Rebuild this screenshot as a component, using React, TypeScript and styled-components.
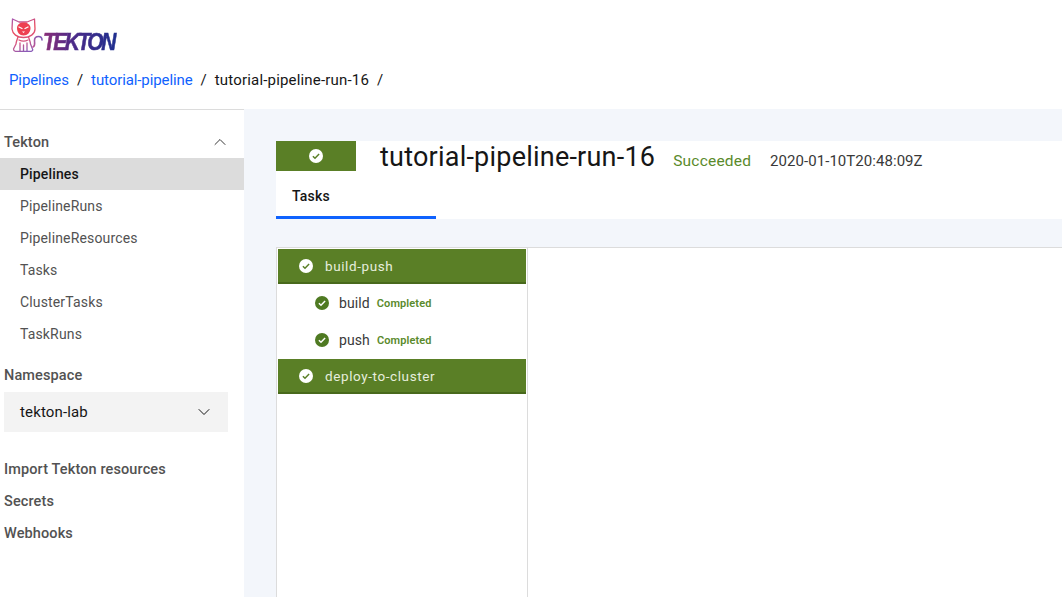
import React from 'react';
import styled, { createGlobalStyle } from 'styled-components';
import { ChevronDown, ChevronUp } from 'lucide-react';

const GlobalStyle = createGlobalStyle`
  html, body {
    margin: 0;
    height: 100%;
    overflow: hidden;
    background: #fff;
    font-family: Roboto, "Liberation Sans", sans-serif;
  }
  * { box-sizing: border-box; }
`;

const Page = styled.div`
  display: flex;
  flex-direction: column;
  height: 597px;
  width: 1062px;
  overflow: hidden;
`;

const TopBar = styled.header`
  height: 109px;
  padding: 18px 0 0 9px;
`;

const LogoRow = styled.div`
  display: flex;
  align-items: flex-end;
  height: 34px;
  margin-left: 2px;
`;

const LogoText = styled.span`
  font-family: "Liberation Sans", sans-serif;
  font-size: 25px;
  line-height: 22px;
  font-weight: 700;
  font-style: italic;
  letter-spacing: -3px;
  padding-right: 4px;
  transform: scale(0.84, 0.96);
  transform-origin: left bottom;
  -webkit-text-stroke: 0.6px transparent;
  background: linear-gradient(90deg, #8c2f78 0%, #4c2a88 40%, #1e2f8f 100%);
  -webkit-background-clip: text;
  background-clip: text;
  -webkit-text-fill-color: transparent;
`;

const Crumbs = styled.nav`
  display: flex;
  align-items: center;
  margin-top: 17px;
  font-size: 15px;
  line-height: 22px;
  color: #161616;
`;

const CrumbLink = styled.a`
  color: #0f62fe;
  letter-spacing: -0.1px;
`;

const CrumbCurrent = styled.span`
  letter-spacing: 0.18px;
`;

const CrumbSep = styled.span`
  margin: 0 8px;
`;

const Body = styled.div`
  display: flex;
  flex: 1;
  min-height: 0;
`;

const Sidebar = styled.aside`
  width: 244px;
  flex: none;
  border-top: 1px solid #dcdcdc;
  padding-top: 16px;
  color: #525252;
`;

const GroupHeader = styled.div`
  display: flex;
  align-items: center;
  justify-content: space-between;
  height: 32px;
  padding: 0 14px 0 4px;
  font-size: 14.5px;
  font-weight: 500;
  letter-spacing: 0.12px;
  color: #525252;
`;

const SideItem = styled.div<{ $active?: boolean }>`
  display: flex;
  align-items: center;
  height: 32px;
  padding-left: 20px;
  font-size: 14px;
  letter-spacing: 0.15px;
  font-weight: ${({ $active }) => ($active ? 500 : 400)};
  color: ${({ $active }) => ($active ? '#161616' : '#525252')};
  background: ${({ $active }) => ($active ? '#dcdcdc' : 'transparent')};
`;

const SectionLabel = styled.div`
  display: flex;
  align-items: center;
  height: 32px;
  padding-left: 4px;
  font-size: 14.5px;
  font-weight: 500;
  letter-spacing: 0.12px;
  color: #525252;
`;

const NamespaceLabel = styled(SectionLabel)`
  margin-top: 9px;
`;

const NamespaceSelect = styled.div`
  display: flex;
  align-items: center;
  justify-content: space-between;
  width: 224px;
  height: 40px;
  margin: 1px 0 21px 4px;
  padding: 0 14px 0 16px;
  background: #f3f3f3;
  color: #161616;
  font-size: 15px;
  letter-spacing: 0.15px;
`;

const Main = styled.main`
  flex: 1;
  min-width: 0;
  display: flex;
  flex-direction: column;
  padding: 32px 0 0 32px;
  background: #f3f6fb;
`;

const RunHeader = styled.div`
  display: flex;
  align-items: flex-start;
  height: 45px;
  background: #fff;
`;

const StatusBlock = styled.div`
  display: flex;
  align-items: center;
  justify-content: center;
  width: 80px;
  height: 30px;
  background: #5a7f26;
`;

const RunTitle = styled.h1`
  margin: -2px 0 0 24px;
  font-size: 27px;
  line-height: 36px;
  font-weight: 400;
  letter-spacing: 0.22px;
  color: #161616;
  white-space: nowrap;
`;

const RunStatus = styled.span`
  margin: 8px 0 0 18px;
  font-size: 15.5px;
  line-height: 24px;
  letter-spacing: 0.2px;
  color: #5a8a2b;
`;

const RunTime = styled.span`
  margin: 8px 0 0 19px;
  font-size: 15px;
  line-height: 24px;
  letter-spacing: 0.05px;
  color: #393939;
`;

const TabRow = styled.div`
  height: 33px;
  background: #fff;
`;

const Tab = styled.div`
  width: 160px;
  height: 33px;
  padding-left: 16px;
  border-bottom: 3px solid #0f62fe;
  font-size: 14px;
  line-height: 21px;
  font-weight: 500;
  letter-spacing: 0.2px;
  color: #161616;
`;

const TaskPanel = styled.section`
  flex: 1;
  margin-top: 28px;
  background: #fff;
  border-top: 1px solid #dcdcdc;
  border-left: 1px solid #dcdcdc;
`;

const TaskList = styled.div`
  width: 251px;
  height: 100%;
  border-right: 1px solid #dcdcdc;
  padding: 1px 0 0 1px;
`;

const StepRow = styled.div`
  display: flex;
  align-items: center;
  height: 37px;
  padding: 1px 0 0 37px;
  font-size: 14px;
  letter-spacing: 0.1px;
  color: #393939;
`;

const TaskHeader = styled.div`
  display: flex;
  align-items: center;
  gap: 12px;
  width: 248px;
  height: 35px;
  padding: 1px 0 0 21px;
  background: #5a7f26;
  border-bottom: 2px solid #48691c;
  color: #e6eedd;
  font-size: 13.5px;
  letter-spacing: 0.6px;

  ${StepRow} + & {
    margin-top: 1px;
  }
`;

const StepName = styled.span`
  margin-left: 10px;
`;

const StepStatus = styled.span`
  margin-left: 7px;
  font-size: 11px;
  font-weight: 600;
  letter-spacing: 0.1px;
  color: #5a8a2b;
`;

const CheckSvg = styled.svg`
  flex: none;
  display: block;
`;

// filled circle with the tick knocked out in the background colour
const Check = ({ fill, tick }: { fill: string; tick: string }) => (
  <CheckSvg width="14" height="14" viewBox="0 0 14 14">
    <circle cx="7" cy="7" r="7" fill={fill} />
    <path d="M3.9 7.2 6 9.2 10.1 5" fill="none" stroke={tick} strokeWidth="1.5" />
  </CheckSvg>
);

const LogoCat = () => (
  <svg width="32" height="34" viewBox="0 0 32 34" fill="none" strokeWidth="1.3" strokeLinecap="round" strokeLinejoin="round">
    <defs>
      <linearGradient id="catGrad" gradientUnits="userSpaceOnUse" x1="2" y1="0" x2="14" y2="34">
        <stop offset="0" stopColor="#a75bb5" />
        <stop offset="0.4" stopColor="#ea4a5c" />
        <stop offset="0.7" stopColor="#d8557f" />
        <stop offset="1" stopColor="#8a5cb8" />
      </linearGradient>
      <linearGradient id="tailGrad" gradientUnits="userSpaceOnUse" x1="20" y1="30" x2="32" y2="20">
        <stop offset="0" stopColor="#c9568f" />
        <stop offset="1" stopColor="#7a5cb8" />
      </linearGradient>
    </defs>
    <g stroke="url(#catGrad)">
      <path d="M1.500 1 8 4h8l7.500-3 .5 10c0 5-5 8.500-11.500 8.500S1.500 16 1 11z" />
      <path d="M7 19c-1 3-2 5-2 7l-2.500 5c0 1.500 1.500 2.500 3.500 2.500h13c2.500 0 3-1.500 2.500-2.500L19.500 26c0-2-1-4-2-7" />
      <path d="M9 25v8M12.500 27v6M16 25v8M8 22c3 1.500 6 1.500 9 0" />
    </g>
    <path d="M22 29c2.500-1 1.500-4 1.500-6.500 0-3 2-4 4-4s3.500 1.500 3.500 3.500" stroke="url(#tailGrad)" strokeWidth="1.600" />
    <path d="M6 10c0-3.500 3-5.500 6.500-5.500S19.500 6.500 19.500 10c0 4.500-3 7.500-7 7.500S6 14.500 6 10z" fill="#ee3f50" />
    <path d="M8 9l3 1.500M17 9l-3 1.500" stroke="#fff" />
    <path d="M11 13.500h3l-1.500 1.500z" fill="#fff" />
  </svg>
);

const App = () => (
  <Page>
    <GlobalStyle />
    <TopBar>
      <LogoRow>
        <LogoCat />
        <LogoText>TEKTON</LogoText>
      </LogoRow>
      <Crumbs>
        <CrumbLink>Pipelines</CrumbLink>
        <CrumbSep>/</CrumbSep>
        <CrumbLink>tutorial-pipeline</CrumbLink>
        <CrumbSep>/</CrumbSep>
        <CrumbCurrent>tutorial-pipeline-run-16</CrumbCurrent>
        <CrumbSep>/</CrumbSep>
      </Crumbs>
    </TopBar>
    <Body>
      <Sidebar>
        <GroupHeader>
          Tekton
          <ChevronUp size={20} strokeWidth={1.2} color="#393939" />
        </GroupHeader>
        <SideItem $active>Pipelines</SideItem>
        <SideItem>PipelineRuns</SideItem>
        <SideItem>PipelineResources</SideItem>
        <SideItem>Tasks</SideItem>
        <SideItem>ClusterTasks</SideItem>
        <SideItem>TaskRuns</SideItem>
        <NamespaceLabel>Namespace</NamespaceLabel>
        <NamespaceSelect>
          tekton-lab
          <ChevronDown size={20} strokeWidth={1.2} color="#161616" />
        </NamespaceSelect>
        <SectionLabel>Import Tekton resources</SectionLabel>
        <SectionLabel>Secrets</SectionLabel>
        <SectionLabel>Webhooks</SectionLabel>
      </Sidebar>
      <Main>
        <RunHeader>
          <StatusBlock>
            <Check fill="#fff" tick="#5a7f26" />
          </StatusBlock>
          <RunTitle>tutorial-pipeline-run-16</RunTitle>
          <RunStatus>Succeeded</RunStatus>
          <RunTime>2020-01-10T20:48:09Z</RunTime>
        </RunHeader>
        <TabRow>
          <Tab>Tasks</Tab>
        </TabRow>
        <TaskPanel>
          <TaskList>
            <TaskHeader>
              <Check fill="#fff" tick="#5a7f26" />
              build-push
            </TaskHeader>
            <StepRow>
              <Check fill="#4f7a22" tick="#fff" />
              <StepName>build</StepName>
              <StepStatus>Completed</StepStatus>
            </StepRow>
            <StepRow>
              <Check fill="#4f7a22" tick="#fff" />
              <StepName>push</StepName>
              <StepStatus>Completed</StepStatus>
            </StepRow>
            <TaskHeader>
              <Check fill="#fff" tick="#5a7f26" />
              deploy-to-cluster
            </TaskHeader>
          </TaskList>
        </TaskPanel>
      </Main>
    </Body>
  </Page>
);

export default App;
